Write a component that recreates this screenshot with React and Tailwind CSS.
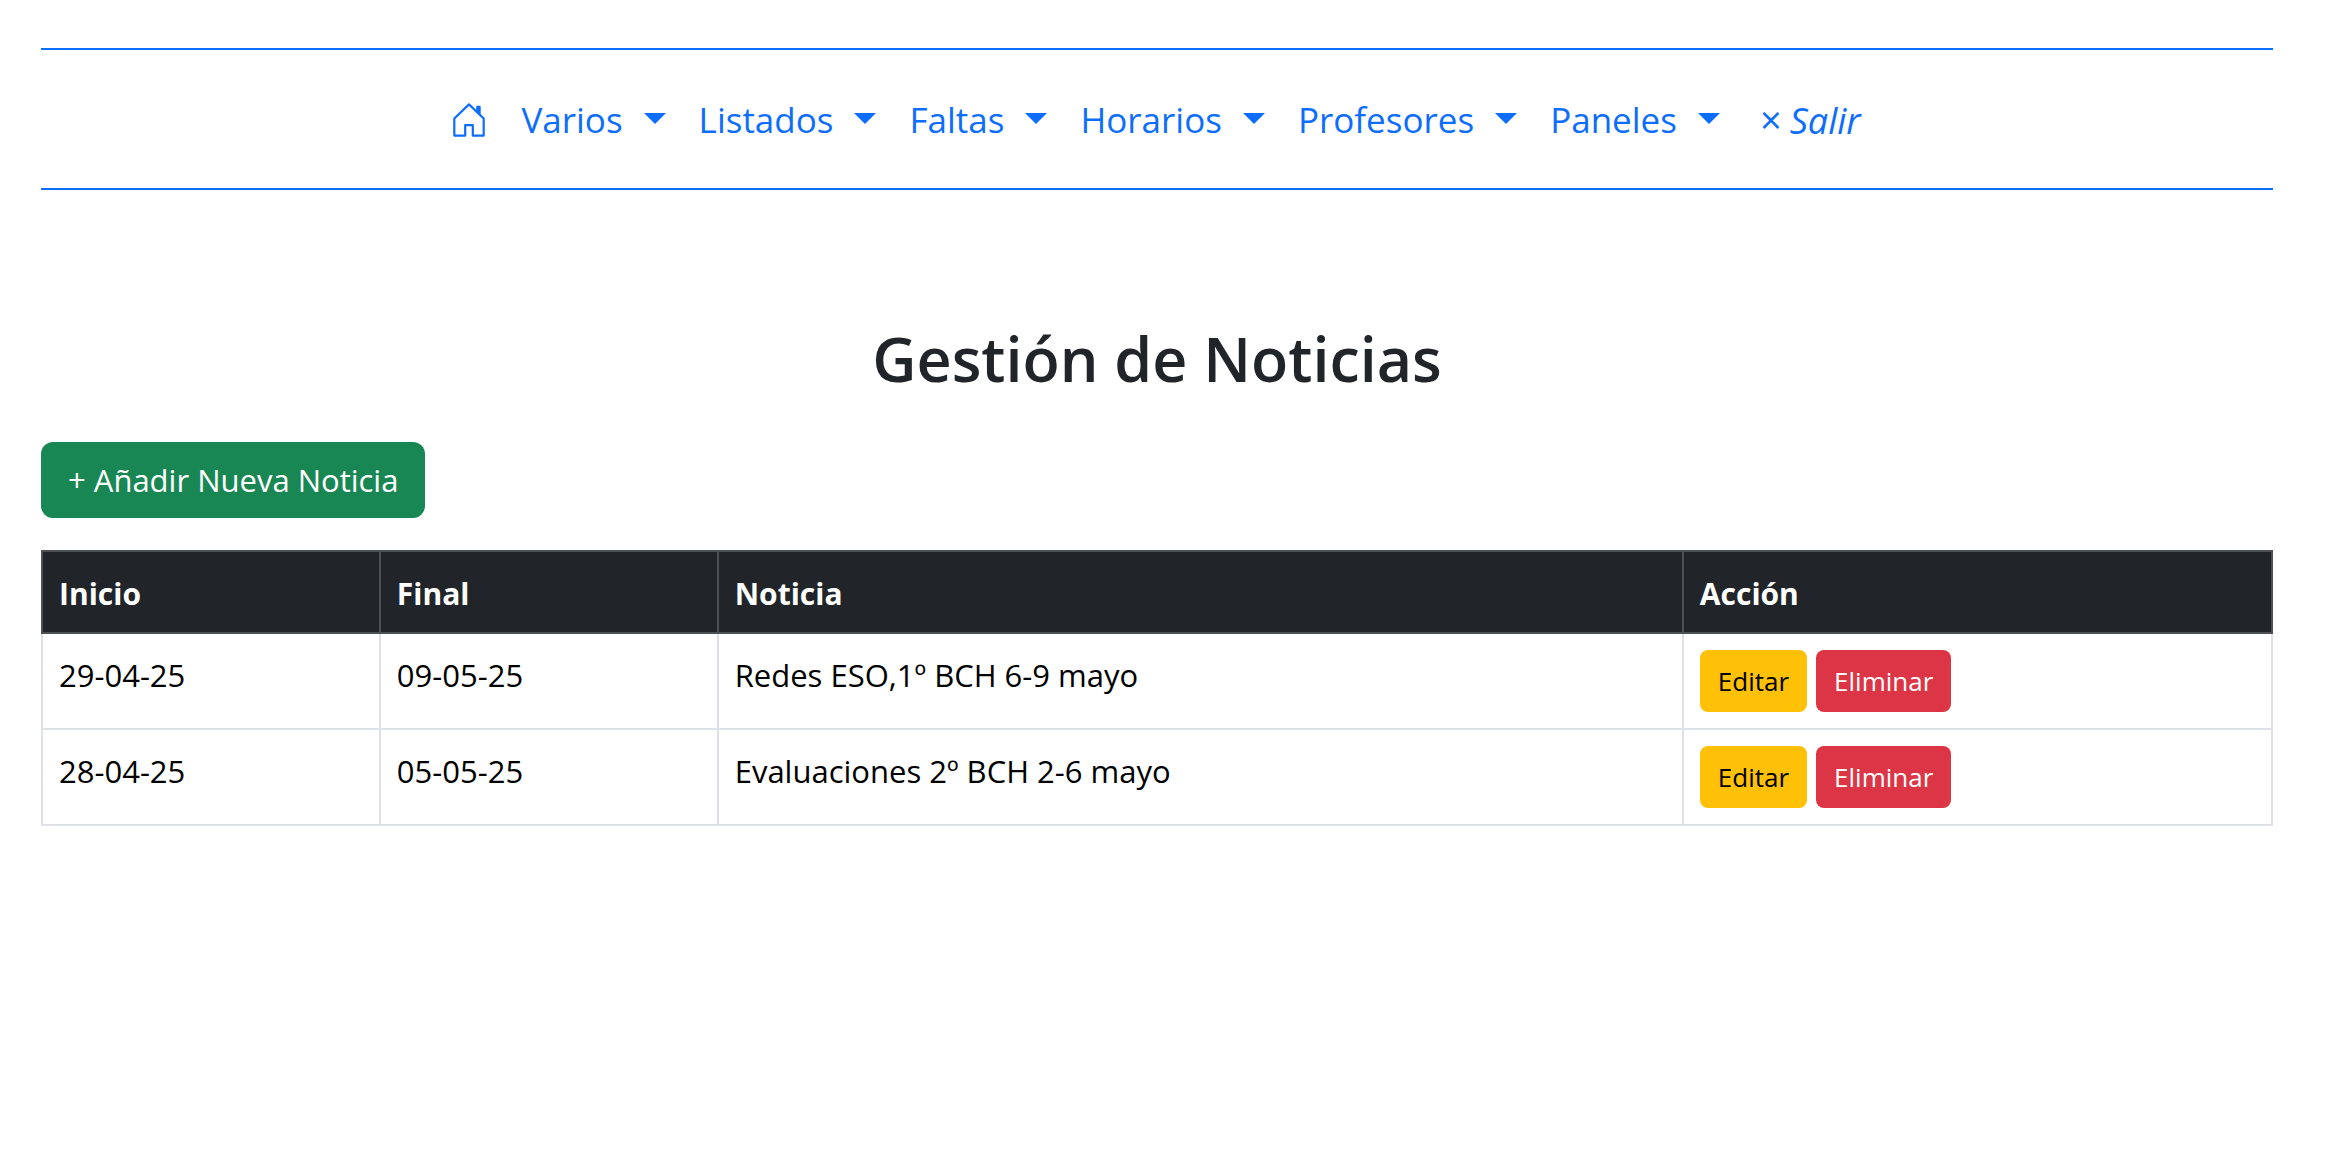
const menus = ["Varios", "Listados", "Faltas", "Horarios", "Profesores", "Paneles"];

const news = [
  { start: "29-04-25", end: "09-05-25", text: "Redes ESO,1º BCH 6-9 mayo" },
  { start: "28-04-25", end: "05-05-25", text: "Evaluaciones 2º BCH 2-6 mayo" },
];

function HomeIcon() {
  return (
    <svg viewBox="0 0 32 34" className="h-[34px] w-8" fill="none" stroke="currentColor" strokeWidth="2.2" strokeLinejoin="round" aria-hidden="true">
      <path d="M1.3 15.5 16 1.4l14.7 14.1V32.6H19.8V22.1h-7.6v10.5H1.3z" />
      <path d="M23.2 3.6l.8-.8h3l.7.8v8.4l-4.5-4.4z" fill="currentColor" stroke="none" />
    </svg>
  );
}

function Caret() {
  return (
    <svg viewBox="0 0 22 11" className="mb-1 h-[11px] w-[22px]" fill="currentColor" aria-hidden="true">
      <path d="M0 0h22L11 11z" />
    </svg>
  );
}

function Th({ children }) {
  return (
    <th scope="col" className="border-2 border-[#4d5154] px-4 pt-[18px] pb-[14px] text-left text-[30px] leading-[48px] font-bold">
      {children}
    </th>
  );
}

function Td({ children }) {
  return <td className="border-2 border-[#dee2e6] p-4 align-top leading-[50px]">{children}</td>;
}

export default function App() {
  return (
    <div className="min-h-screen bg-white pt-12 pr-[53px] pl-[41px] font-['Open_Sans','Noto_Sans',sans-serif] text-[31px] leading-[48px] text-black">
      <nav className="flex h-[142px] items-center justify-center border-y-2 border-[#0d6efd] pt-[2px] text-[35px] text-[#0d6efd]">
        <a href="#inicio" aria-label="Inicio" className="mr-9">
          <HomeIcon />
        </a>
        <ul className="flex gap-[33px]">
          {menus.map((name) => (
            <li key={name}>
              <button type="button" className="flex items-center gap-[21px]">
                {name}
                <Caret />
              </button>
            </li>
          ))}
        </ul>
        <a href="#salir" className="ml-10 flex items-baseline gap-2">
          <span className="text-[38px]">×</span>
          <span className="text-[36px] italic">Salir</span>
        </a>
      </nav>
      <main>
        <h1 className="mt-[130px] text-center text-[61px] leading-[77px] font-semibold text-[#212529]">Gestión de Noticias</h1>
        <button type="button" className="mt-[45px] rounded-xl bg-[#198754] px-[27px] py-[14px] text-white">
          + Añadir Nueva Noticia
        </button>
        <table className="mt-8 w-full table-fixed border-collapse">
          <colgroup>
            <col className="w-[15.15%]" />
            <col className="w-[15.15%]" />
            <col className="w-[43.28%]" />
            <col />
          </colgroup>
          <thead className="bg-[#212529] text-white">
            <tr>
              <Th>Inicio</Th>
              <Th>Final</Th>
              <Th>Noticia</Th>
              <Th>Acción</Th>
            </tr>
          </thead>
          <tbody>
            {news.map((item) => (
              <tr key={item.start}>
                <Td>{item.start}</Td>
                <Td>{item.end}</Td>
                <Td>{item.text}</Td>
                <Td>
                  <div className="flex gap-[9px] text-[26px] leading-[42px]">
                    <button type="button" className="rounded-lg bg-[#ffc107] px-[18px] py-[10px]">
                      Editar
                    </button>
                    <button type="button" className="rounded-lg bg-[#dc3545] px-[18px] py-[10px] text-white">
                      Eliminar
                    </button>
                  </div>
                </Td>
              </tr>
            ))}
          </tbody>
        </table>
      </main>
    </div>
  );
}
